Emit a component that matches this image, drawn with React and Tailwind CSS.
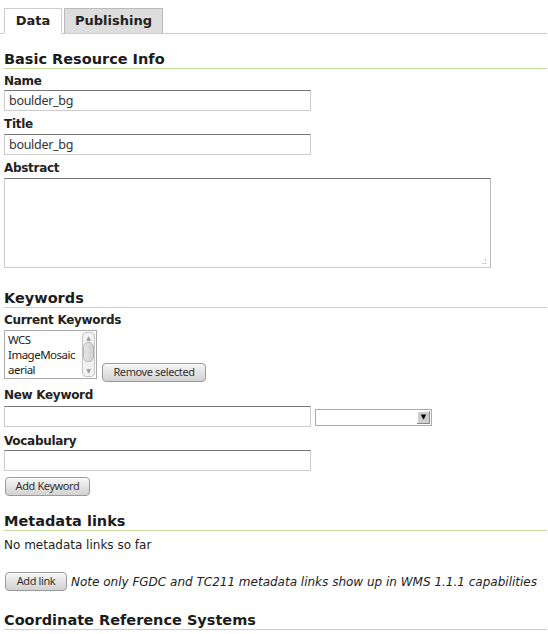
const label = "block h-[16px] text-[12px] leading-[16px] font-bold tracking-[-0.3px] text-[#222] font-['DejaVu_Sans',sans-serif]";
const input = "block h-[21px] w-[307px] border border-[#ccc] border-t-[#777] bg-white px-[4px] text-[12.5px] tracking-[-0.3px] text-[#333] font-['Noto_Sans',sans-serif] outline-none";
const heading = "pt-[1px] border-b border-[#c5dca0] text-[14.5px] leading-[18px] font-bold text-[#1c1c1c] font-['DejaVu_Sans',sans-serif]";
const button = "flex h-[19px] items-center rounded-[4px] border border-[#9a9a9a] bg-gradient-to-b from-[#f6f6f6] to-[#d2d2d2] px-[8px] text-[11px] text-[#333] tracking-[-0.4px] font-['Liberation_Sans_Narrow','Noto_Sans',sans-serif] shadow-[inset_0_1px_0_#fff]";

const Heading = ({ children, className = '' }) => (
  <div className={`${heading} ${className}`}>{children}</div>
);

const App = () => {
  return (
    <div className="min-h-[634px] bg-white pl-[4px] pr-[1px] pt-[8px] font-['DejaVu_Sans',sans-serif]">
      {/* tabs */}
      <div className="-ml-[4px] flex border-b border-[#ccc] pl-[4px]">
        <div className="-mb-px flex h-[26px] w-[58px] items-center justify-center border border-[#ccc] border-b-white bg-white text-[13px] font-bold text-[#222]">
          Data
        </div>
        <div className="ml-[2px] flex h-[25px] w-[99px] items-center justify-center border border-b-0 border-[#bbb] bg-[#dddddd] text-[13px] font-bold text-[#222]">
          Publishing
        </div>
      </div>

      {/* basic info */}
      <Heading className="mt-[15px]">Basic Resource Info</Heading>
      <label className={`${label} mt-[4px]`}>Name</label>
      <input className={`${input} mt-[1px]`} defaultValue="boulder_bg" />
      <label className={`${label} mt-[5px]`}>Title</label>
      <input className={`${input} mt-[2px]`} defaultValue="boulder_bg" />
      <label className={`${label} mt-[5px]`}>Abstract</label>
      <div className="relative mt-[2px] h-[90px] w-[487px] border border-[#ccc] border-t-[#777] border-r-[#bbb] bg-white">
        <span className="absolute bottom-[1px] right-[3px] text-[8px] leading-none text-[#888]">.:</span>
      </div>

      {/* keywords */}
      <Heading className="mt-[20px]">Keywords</Heading>
      <label className={`${label} mt-[4px]`}>Current Keywords</label>
      <div className="mt-[2px] flex items-start">
        <div className="flex h-[49px] w-[93px] border border-[#aaa] bg-white">
          <div className="flex-1 overflow-hidden pl-[3px] pt-[1px] text-[11.5px] leading-[15px] text-[#222] font-['Noto_Sans',sans-serif] tracking-[-0.5px]">
            <div>WCS</div>
            <div>ImageMosaic</div>
            <div>aerial</div>
          </div>
          <div className="m-[1px] flex w-[13px] shrink-0 flex-col items-center rounded-[4px] border border-[#c4c4c4] bg-[#f2f2f2]">
            <span className="mt-[1px] text-[6px] leading-[8px] text-[#999]">▲</span>
            <div className="h-[20px] w-[11px] rounded-[5px] border border-[#b8b8b8] bg-gradient-to-r from-[#e6e6e6] to-[#d0d0d0]" />
            <span className="mt-auto mb-[1px] text-[6px] leading-[8px] text-[#999]">▼</span>
          </div>
        </div>
        <button className={`${button} ml-[5px] mt-[33px] w-[104px] justify-center`}>Remove selected</button>
      </div>

      <label className={`${label} mt-[5px]`}>New Keyword</label>
      <div className="mt-[3px] flex items-end">
        <input className={input} />
        <div className="mb-[1px] ml-[4px] flex h-[17px] w-[117px] border border-[#aaa] bg-white">
          <div className="flex-1" />
          <div className="m-[1px] flex w-[13px] items-center justify-center bg-[#cfcfcf] shadow-[inset_-1px_-1px_0_#888,inset_1px_1px_0_#fff] text-[7px] leading-none text-black">
            ▼
          </div>
        </div>
      </div>

      <label className={`${label} mt-[6px]`}>Vocabulary</label>
      <input className={`${input} mt-[1px]`} />
      <button className={`${button} ml-[1px] mt-[6px] w-[85px] justify-center`}>Add Keyword</button>

      {/* metadata links */}
      <Heading className="mt-[15px]">Metadata links</Heading>
      <p className="mt-[6px] h-[16px] text-[12px] leading-[16px] text-[#222]">No metadata links so far</p>
      <div className="mt-[19px] flex items-center">
        <button className={`${button} ml-[1px] w-[62px] justify-center`}>Add link</button>
        <span className="ml-[4px] text-[12px] italic text-[#222]">
          Note only FGDC and TC211 metadata links show up in WMS 1.1.1 capabilities
        </span>
      </div>

      <Heading className="mt-[19px]">Coordinate Reference Systems</Heading>
    </div>
  );
};

export default App;
